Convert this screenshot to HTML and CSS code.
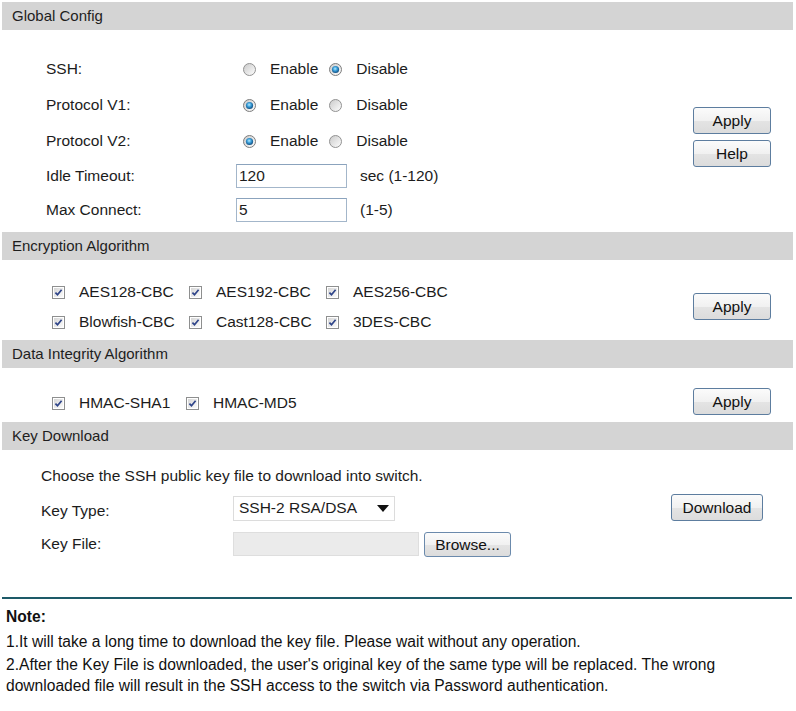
FILE: index.html
```html
<!DOCTYPE html>
<html>
<head>
<meta charset="utf-8">
<link rel="stylesheet" href="styles.css">
</head>
<body>
<svg class="defs" width="0" height="0" aria-hidden="true">
  <defs>
    <linearGradient id="rfill" x1="0" y1="0" x2="1" y2="1">
      <stop offset="0" stop-color="#c9c9c9"/>
      <stop offset="1" stop-color="#ffffff"/>
    </linearGradient>
    <radialGradient id="rdot" cx="0.45" cy="0.4" r="0.6">
      <stop offset="0" stop-color="#b8ecff"/>
      <stop offset="0.45" stop-color="#3ea2dc"/>
      <stop offset="1" stop-color="#0c4a7e"/>
    </radialGradient>
    <linearGradient id="cfill" x1="0" y1="0" x2="1" y2="1">
      <stop offset="0" stop-color="#d6d6d6"/>
      <stop offset="1" stop-color="#fbfbfb"/>
    </linearGradient>
  </defs>
</svg>
<div class="page">
  <section class="panel">
    <div class="bar">Global Config</div>
    <div class="body global">
      <div class="form">
        <div class="label r36">SSH:</div>
        <div class="ctl r36">
          <svg class="radio" viewBox="0 0 13 13"><circle cx="6.5" cy="6.5" r="6" fill="url(#rfill)" stroke="#929292"/></svg><span class="opt">Enable</span>
          <svg class="radio" viewBox="0 0 13 13"><circle cx="6.5" cy="6.5" r="6" fill="url(#rfill)" stroke="#7d7d7d"/><circle cx="6.5" cy="6.5" r="3.6" fill="url(#rdot)"/></svg><span class="opt">Disable</span>
        </div>
        <div class="label r36">Protocol V1:</div>
        <div class="ctl r36">
          <svg class="radio" viewBox="0 0 13 13"><circle cx="6.5" cy="6.5" r="6" fill="url(#rfill)" stroke="#7d7d7d"/><circle cx="6.5" cy="6.5" r="3.6" fill="url(#rdot)"/></svg><span class="opt">Enable</span>
          <svg class="radio" viewBox="0 0 13 13"><circle cx="6.5" cy="6.5" r="6" fill="url(#rfill)" stroke="#929292"/></svg><span class="opt">Disable</span>
        </div>
        <div class="label r36">Protocol V2:</div>
        <div class="ctl r36">
          <svg class="radio" viewBox="0 0 13 13"><circle cx="6.5" cy="6.5" r="6" fill="url(#rfill)" stroke="#7d7d7d"/><circle cx="6.5" cy="6.5" r="3.6" fill="url(#rdot)"/></svg><span class="opt">Enable</span>
          <svg class="radio" viewBox="0 0 13 13"><circle cx="6.5" cy="6.5" r="6" fill="url(#rfill)" stroke="#929292"/></svg><span class="opt">Disable</span>
        </div>
        <div class="label r34">Idle Timeout:</div>
        <div class="ctl r34"><div class="text">120</div><span class="hint">sec (1-120)</span></div>
        <div class="label r34">Max Connect:</div>
        <div class="ctl r34"><div class="text">5</div><span class="hint">(1-5)</span></div>
      </div>
      <div class="actions global-actions">
        <div class="btn">Apply</div>
        <div class="btn">Help</div>
      </div>
    </div>
  </section>

  <section class="panel">
    <div class="bar">Encryption Algorithm</div>
    <div class="body enc">
      <div class="checks">
        <div class="chk"><svg class="box" viewBox="0 0 13 13"><rect x="0.5" y="0.5" width="12" height="12" fill="#fff" stroke="#8e8f8f"/><rect x="2" y="2" width="9" height="9" fill="url(#cfill)"/><path d="M3.4 6.6 L5.5 8.7 L9.6 3.8" fill="none" stroke="#2e4489" stroke-width="1.7"/></svg><span>AES128-CBC</span></div>
        <div class="chk"><svg class="box" viewBox="0 0 13 13"><rect x="0.5" y="0.5" width="12" height="12" fill="#fff" stroke="#8e8f8f"/><rect x="2" y="2" width="9" height="9" fill="url(#cfill)"/><path d="M3.4 6.6 L5.5 8.7 L9.6 3.8" fill="none" stroke="#2e4489" stroke-width="1.7"/></svg><span>AES192-CBC</span></div>
        <div class="chk"><svg class="box" viewBox="0 0 13 13"><rect x="0.5" y="0.5" width="12" height="12" fill="#fff" stroke="#8e8f8f"/><rect x="2" y="2" width="9" height="9" fill="url(#cfill)"/><path d="M3.4 6.6 L5.5 8.7 L9.6 3.8" fill="none" stroke="#2e4489" stroke-width="1.7"/></svg><span>AES256-CBC</span></div>
        <div class="chk"><svg class="box" viewBox="0 0 13 13"><rect x="0.5" y="0.5" width="12" height="12" fill="#fff" stroke="#8e8f8f"/><rect x="2" y="2" width="9" height="9" fill="url(#cfill)"/><path d="M3.4 6.6 L5.5 8.7 L9.6 3.8" fill="none" stroke="#2e4489" stroke-width="1.7"/></svg><span>Blowfish-CBC</span></div>
        <div class="chk"><svg class="box" viewBox="0 0 13 13"><rect x="0.5" y="0.5" width="12" height="12" fill="#fff" stroke="#8e8f8f"/><rect x="2" y="2" width="9" height="9" fill="url(#cfill)"/><path d="M3.4 6.6 L5.5 8.7 L9.6 3.8" fill="none" stroke="#2e4489" stroke-width="1.7"/></svg><span>Cast128-CBC</span></div>
        <div class="chk"><svg class="box" viewBox="0 0 13 13"><rect x="0.5" y="0.5" width="12" height="12" fill="#fff" stroke="#8e8f8f"/><rect x="2" y="2" width="9" height="9" fill="url(#cfill)"/><path d="M3.4 6.6 L5.5 8.7 L9.6 3.8" fill="none" stroke="#2e4489" stroke-width="1.7"/></svg><span>3DES-CBC</span></div>
      </div>
      <div class="actions enc-actions">
        <div class="btn">Apply</div>
      </div>
    </div>
  </section>

  <section class="panel">
    <div class="bar">Data Integrity Algorithm</div>
    <div class="body integ">
      <div class="checks-row">
        <div class="chk"><svg class="box" viewBox="0 0 13 13"><rect x="0.5" y="0.5" width="12" height="12" fill="#fff" stroke="#8e8f8f"/><rect x="2" y="2" width="9" height="9" fill="url(#cfill)"/><path d="M3.4 6.6 L5.5 8.7 L9.6 3.8" fill="none" stroke="#2e4489" stroke-width="1.7"/></svg><span>HMAC-SHA1</span></div>
        <div class="chk"><svg class="box" viewBox="0 0 13 13"><rect x="0.5" y="0.5" width="12" height="12" fill="#fff" stroke="#8e8f8f"/><rect x="2" y="2" width="9" height="9" fill="url(#cfill)"/><path d="M3.4 6.6 L5.5 8.7 L9.6 3.8" fill="none" stroke="#2e4489" stroke-width="1.7"/></svg><span>HMAC-MD5</span></div>
      </div>
      <div class="actions integ-actions">
        <div class="btn">Apply</div>
      </div>
    </div>
  </section>

  <section class="panel">
    <div class="bar">Key Download</div>
    <div class="body keydl">
      <div class="kform">
        <div class="intro">Choose the SSH public key file to download into switch.</div>
        <div class="krow r33">
          <div class="klabel">Key Type:</div>
          <div class="select"><span>SSH-2 RSA/DSA</span><span class="arrow"></span></div>
        </div>
        <div class="krow r34">
          <div class="klabel">Key File:</div>
          <div class="file"></div>
          <div class="btn browse">Browse...</div>
        </div>
      </div>
      <div class="actions key-actions">
        <div class="btn download">Download</div>
      </div>
    </div>
  </section>

  <div class="rule"></div>
  <div class="note">
    <div class="note-title">Note:</div>
    <p>1.It will take a long time to download the key file. Please wait without any operation.</p>
    <p>2.After the Key File is downloaded, the user's original key of the same type will be replaced. The wrong<br>downloaded file will result in the SSH access to the switch via Password authentication.</p>
  </div>
</div>
</body>
</html>
```

FILE: styles.css
```css
html, body {
  margin: 0;
  padding: 0;
  background: #ffffff;
}
body {
  font-family: "Liberation Sans", Arial, sans-serif;
  font-size: 15.5px;
  color: #1c1c1c;
}
.defs {
  display: block;
  width: 0;
  height: 0;
  overflow: hidden;
}
.page {
  margin: 0 3px 0 2px;
  padding-top: 2px;
}
.bar {
  background: #d4d4d4;
  height: 28px;
  line-height: 28px;
  padding-left: 10px;
  font-size: 15px;
  color: #1e1e1e;
}
.body {
  display: grid;
  grid-template-columns: 1fr 100px;
}
.actions {
  display: flex;
  flex-direction: column;
  gap: 6px;
}
.btn {
  box-sizing: border-box;
  width: 78px;
  height: 27px;
  border: 1px solid #5d7d9f;
  border-radius: 3px;
  background: linear-gradient(#fbfbfb 0%, #f1f1f1 50%, #e4e4e4 51%, #dcdcdc 100%);
  text-align: center;
  line-height: 25px;
  font-size: 15.5px;
  color: #111;
}

/* Global config */
.global {
  height: 202px;
}
.form {
  display: grid;
  grid-template-columns: 190px auto;
  align-content: start;
  padding-top: 21px;
  padding-left: 44px;
}
.r36 { height: 36px; }
.r34 { height: 34px; }
.r33 { height: 33px; }
.label, .ctl {
  display: flex;
  align-items: center;
}
.radio {
  width: 13px;
  height: 13px;
  margin-left: 7px;
  margin-right: 14px;
}
.opt + .radio {
  margin-left: 11px;
}
.text {
  box-sizing: border-box;
  width: 111px;
  height: 24px;
  border: 1px solid #a3b6ca;
  border-top-color: #8ba3bd;
  padding-left: 2px;
  line-height: 22px;
}
.hint {
  margin-left: 13px;
}
.global-actions {
  padding-top: 77px;
}

/* Encryption */
.enc {
  height: 80px;
}
.checks {
  display: grid;
  grid-template-columns: 137px 137px auto;
  grid-auto-rows: 30px;
  padding-top: 17px;
  padding-left: 50px;
}
.chk {
  display: flex;
  align-items: center;
}
.box {
  width: 13px;
  height: 13px;
  margin-right: 14px;
}
.enc-actions {
  padding-top: 33px;
}

/* Integrity */
.integ {
  height: 54px;
}
.checks-row {
  display: grid;
  grid-template-columns: 134px auto;
  grid-auto-rows: 30px;
  padding-top: 20px;
  padding-left: 50px;
}
.integ-actions {
  padding-top: 20px;
}

/* Key download */
.keydl {
  grid-template-columns: 1fr 122px;
  height: 130px;
}
.kform {
  padding-top: 13px;
  padding-left: 39px;
}
.intro {
  height: 26px;
  line-height: 26px;
  margin-bottom: 5px;
}
.krow {
  display: flex;
  align-items: center;
}
.klabel {
  width: 192px;
}
.select {
  box-sizing: border-box;
  width: 162px;
  height: 25px;
  margin-top: -5px;
  border: 1px solid #dcdcdc;
  background: #fff;
  display: flex;
  align-items: center;
  justify-content: space-between;
  padding-left: 5px;
  padding-right: 5px;
}
.arrow {
  width: 0;
  height: 0;
  border-left: 6px solid transparent;
  border-right: 6px solid transparent;
  border-top: 7px solid #111;
}
.file {
  box-sizing: border-box;
  width: 186px;
  height: 24px;
  background: #ebebeb;
  border: 1px solid #dedede;
}
.browse {
  width: 87px;
  height: 25px;
  line-height: 23px;
  margin-left: 5px;
  border-color: #6b8aac;
}
.key-actions {
  padding-top: 44px;
}
.download {
  width: 92px;
}

/* Note */
.rule {
  margin-top: 17px;
  height: 2px;
  background: #1d5a68;
  margin-right: 1px;
}
.note {
  padding-left: 4px;
  font-family: "Liberation Sans", Arial, sans-serif;
  font-size: 15.6px;
  color: #111;
}
.note-title {
  font-weight: bold;
  height: 24px;
  line-height: 24px;
  margin-top: 6px;
}
.note p {
  margin: 0;
  line-height: 21px;
  padding-top: 2px;
}
```
